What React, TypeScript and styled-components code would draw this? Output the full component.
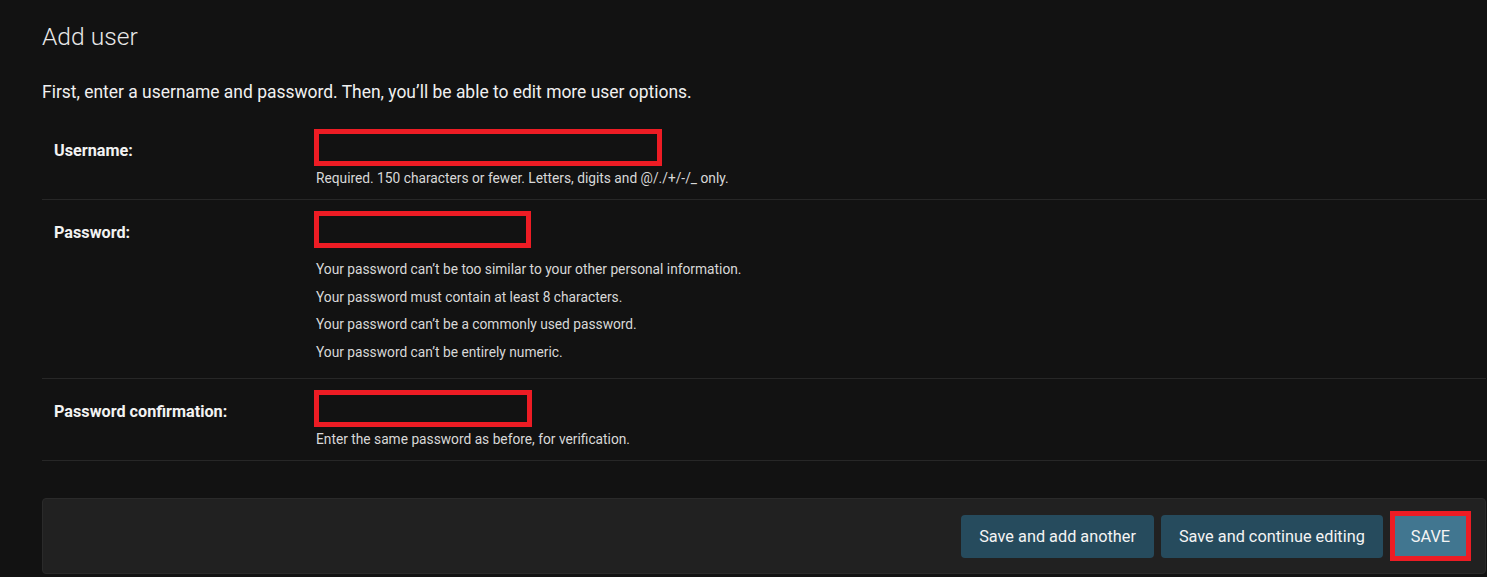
import React from "react";
import styled, { createGlobalStyle } from "styled-components";

const GlobalStyle = createGlobalStyle`
    html, body {
        margin: 0;
        padding: 0;
        background: #121212;
    }
    body {
        font-family: Roboto, "Liberation Sans", sans-serif;
        color: #eeeeee;
    }
`;

const HIGHLIGHT = "#ed1c24";

const helpLines = [
    "Your password can’t be too similar to your other personal information.",
    "Your password must contain at least 8 characters.",
    "Your password can’t be a commonly used password.",
    "Your password can’t be entirely numeric.",
];

export default function App() {
    return (
        <Page>
            <GlobalStyle />
            <Title>Add user</Title>
            <Intro>
                First, enter a username and password. Then, you’ll be able to
                edit more user options.
            </Intro>
            <Fieldset>
                <FormRow>
                    <Label>Username:</Label>
                    <Field>
                        <TextInput width={348} />
                        <Help>
                            Required. 150 characters or fewer. Letters, digits
                            and @/./+/-/_ only.
                        </Help>
                    </Field>
                </FormRow>
                <FormRow>
                    <Label>Password:</Label>
                    <Field>
                        <TextInput width={217} />
                        <HelpList>
                            {helpLines.map((line) => (
                                <li key={line}>{line}</li>
                            ))}
                        </HelpList>
                    </Field>
                </FormRow>
                <FormRow>
                    <Label>Password confirmation:</Label>
                    <Field>
                        <TextInput width={218} />
                        <Help>
                            Enter the same password as before, for
                            verification.
                        </Help>
                    </Field>
                </FormRow>
            </Fieldset>
            <SubmitRow>
                <Button>Save and add another</Button>
                <Button>Save and continue editing</Button>
                <Button primary>SAVE</Button>
            </SubmitRow>
        </Page>
    );
}

const Page = styled.div`
    padding: 22px 1px 0 42px;
`;

const Title = styled.h1`
    margin: 0;
    font-size: 24.6px;
    line-height: 30px;
    font-weight: 300;
    color: #e8e8e8;
`;

const Intro = styled.p`
    margin: 28px 0 13px;
    font-size: 17.45px;
    line-height: 25px;
    color: #f0f0f0;
`;

const Fieldset = styled.div`
    display: flex;
    flex-direction: column;
`;

const FormRow = styled.div`
    display: flex;
    align-items: flex-start;
    padding: 11px 12px 13px;
    border-bottom: 1px solid #272727;
`;

const Label = styled.label`
    width: 260px;
    flex: none;
    padding-top: 12px;
    font-size: 16.2px;
    line-height: 19px;
    font-weight: 700;
    color: #f2f2f2;
`;

const Field = styled.div`
    display: flex;
    flex-direction: column;
    align-items: flex-start;
`;

const TextInput = styled.div<{ width: number }>`
    box-sizing: border-box;
    width: ${(props) => props.width}px;
    height: 37px;
    border: 5px solid ${HIGHLIGHT};
    background: #121212;
`;

const Help = styled.div`
    margin-top: 4px;
    margin-bottom: -1px;
    padding-left: 2px;
    font-size: 13.75px;
    line-height: 17px;
    color: #d8d8d8;
`;

const HelpList = styled.ul`
    margin: 8px 0 -1px;
    padding: 0 0 0 2px;
    list-style: none;
    font-size: 13.75px;
    line-height: 17.5px;
    color: #d8d8d8;

    li {
        padding: 5px 0;
    }
`;

const SubmitRow = styled.div`
    box-sizing: border-box;
    height: 76px;
    margin-top: 37px;
    display: flex;
    align-items: center;
    justify-content: flex-end;
    gap: 7px;
    padding: 0 14px 0 13px;
    background: #212121;
    border: 1px solid #2a2a2a;
    border-radius: 4px;
`;

const Button = styled.button<{ primary?: boolean }>`
    font-family: Roboto, "Liberation Sans", sans-serif;
    font-size: 16.3px;
    color: #f4f4f4;
    cursor: pointer;
    border-radius: ${(props) => (props.primary ? "0" : "4px")};
    background: ${(props) => (props.primary ? "#417690" : "#264b5d")};
    border: ${(props) => (props.primary ? `5px solid ${HIGHLIGHT}` : "none")};
    height: ${(props) => (props.primary ? "50px" : "43px")};
    padding: ${(props) => (props.primary ? "0 16px" : "0 18px")};
    box-sizing: border-box;
`;
